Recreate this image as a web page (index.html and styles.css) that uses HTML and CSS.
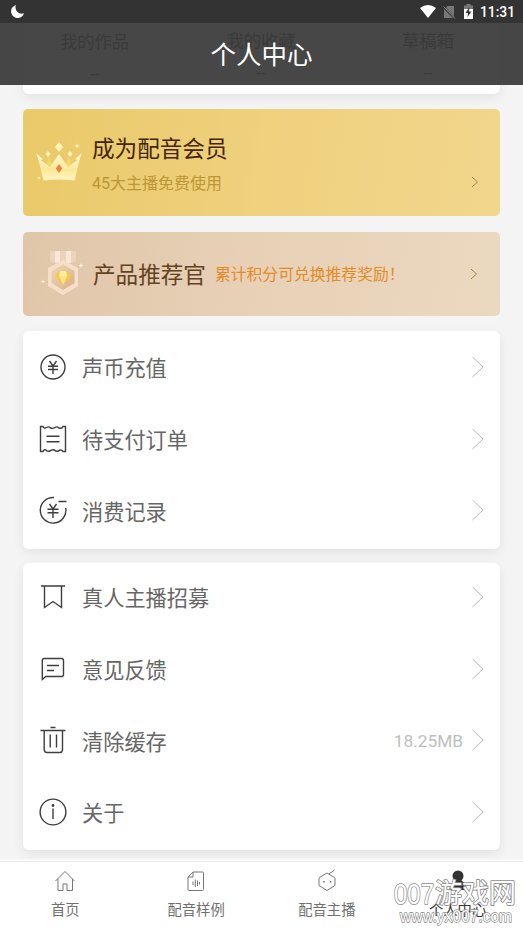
FILE: index.html
```html
<!DOCTYPE html>
<html lang="zh-CN">
<head>
<meta charset="utf-8">
<title>个人中心</title>
<link rel="stylesheet" href="styles.css">
</head>
<body>
<header class="top">
  <div class="status">
    <svg class="moon" width="15" height="15" viewBox="0 0 15 15"><path d="M6 1A6.600 6.600 0 1 0 14 9.300A6.300 6.300 0 0 1 6 1Z" fill="#fff"/></svg>
    <div class="status-right">
      <svg width="16" height="13" viewBox="0 0 16 13"><path d="M0 3Q8-3 16 3L8 13Z" fill="#fff"/></svg>
      <svg class="sim" width="13" height="14" viewBox="0 0 13 14"><path d="M4.500 1H11V11.500L3 3ZM1 4L10 13H1Z" fill="#777"/><path d="M.5 1.500L12 13.500" stroke="#888" stroke-width="1"/></svg>
      <svg class="battery" width="9" height="15" viewBox="0 0 9 15"><path d="M2.500 0H6.500V1.500H9V6H0V1.500H2.500Z" fill="#777"/><path d="M0 5H9V15H0Z" fill="#fff"/><path d="M5.500 3L1.500 9H4L3.500 13L7.500 7.500H5Z" fill="#333"/></svg>
      <span class="clock">11:31</span>
    </div>
  </div>
  <h1 class="title">个人中心</h1>
</header>

<main class="content">
  <section class="card stats">
    <div class="stat stat-works"><span>我的作品</span><span class="dash">--</span></div>
    <div class="stat stat-favorites"><span>我的收藏</span><span class="dash">--</span></div>
    <div class="stat stat-drafts"><span>草稿箱</span><span class="dash">--</span></div>
  </section>

  <section class="banner vip">
    <svg class="crown" width="48" height="42" viewBox="0 0 48 42">
      <defs><linearGradient id="cr" x2="0" y2="1"><stop offset="0" stop-color="#fff8d2"/><stop offset=".6" stop-color="#fbe998"/><stop offset="1" stop-color="#fff6c8"/></linearGradient></defs>
      <path d="M9 30L14 15L21 30ZM27 30L34 15L39 30Z" fill="#f3d966"/>
      <path d="M3 16L15 25L24 12L33 25L45 16L39.500 38.500Q24 36.500 8.500 38.500Z" fill="url(#cr)"/>
      <path d="M24 0L28 5L24 10L20 5ZM13 9L15.500 12L13 15L10.500 12ZM35 9L37.500 12L35 15L32.500 12ZM1 11L8 17L4 19ZM47 11L40 17L44 19Z" fill="#fff3bd"/>
      <path d="M24 22L27.200 26.500L24 31L20.800 26.500Z" fill="#f5803c"/>
      <path d="M42 1L42.700 3.300L45 4L42.700 4.700L42 7L41.300 4.700L39 4L41.300 3.300ZM4 34L4.500 35.500L6 36L4.500 36.500L4 38L3.500 36.500L2 36L3.500 35.500Z" fill="#fff3bd"/>
    </svg>
    <div class="vip-text">
      <div class="banner-title">成为配音会员</div>
      <div class="vip-sub">45大主播免费使用</div>
    </div>
    <svg class="small-arrow vip-arrow" width="8" height="12" viewBox="0 0 8 12"><path d="M1 1L6.500 6L1 11"/></svg>
  </section>

  <section class="banner officer">
    <svg class="medal" width="44" height="46" viewBox="0 0 44 46">
      <defs><linearGradient id="md" x2="1" y2="1"><stop offset="0" stop-color="#f0d6ba"/><stop offset="1" stop-color="#d9ae84"/></linearGradient></defs>
      <path d="M10 1H36V10Q36 13 31 12H15Q10 13 10 10Z" fill="#edd3b9"/>
      <path d="M15 1H20V13H15ZM26 1H31V13H26Z" fill="#f9e8d9"/>
      <path d="M23 10L38 18V36L23 45L8 36V18Z" fill="#f6dfc8"/>
      <path d="M23 14.500L34.500 21V33L23 40L11.500 33V21Z" fill="url(#md)"/>
      <path d="M19 21H27L31 26L23 34.500L15 26Z" fill="#f9ca43"/>
      <path d="M20 21H26L27 26H19Z" fill="#fff0a0"/>
      <path d="M19 26H27L23 34.500Z" fill="#fde488"/>
      <path d="M41 13L41.700 14.800L43.500 15.500L41.700 16.200L41 18L40.300 16.200L38.500 15.500L40.300 14.800ZM3 29L3.600 30.900L5.500 31.500L3.600 32.100L3 34L2.400 32.100L.5 31.500L2.400 30.900Z" fill="#fff1df"/>
    </svg>
    <div class="banner-title officer-title">产品推荐官</div>
    <div class="officer-sub">累计积分可兑换推荐奖励！</div>
    <svg class="small-arrow officer-arrow" width="8" height="12" viewBox="0 0 8 12"><path d="M1 1L6.500 6L1 11"/></svg>
  </section>

  <section class="card menu wallet">
    <div class="row">
      <svg class="icon" viewBox="0 0 30 30"><circle cx="15" cy="15" r="12"/><path d="M11.500 9L15 14L18.500 9M10 14.200H20M10 17.500H20M15 14V22"/></svg>
      <span class="label">声币充值</span><svg class="arrow" viewBox="0 0 14 22"><path d="M1.500 1L12 11L1.500 21"/></svg>
    </div>
    <div class="row">
      <svg class="icon" viewBox="0 0 30 30"><path d="M2.500 2.500H5Q6 5 8.500 3.500Q11 2 12.500 4Q15 5 17 3.500Q19 2 21 4Q24 5 25 2.500H27.500V27.500H25Q23 25 20.500 27Q18 28 16.500 26Q14 25 12 27Q9 28 8 26Q6 25 5 27.500H2.500Z"/><path d="M8.500 12.300H21.500M8.500 17.700H21.500"/></svg>
      <span class="label">待支付订单</span><svg class="arrow" viewBox="0 0 14 22"><path d="M1.500 1L12 11L1.500 21"/></svg>
    </div>
    <div class="row">
      <svg class="icon" viewBox="0 0 30 30"><path d="M16 2.500A12.800 12.800 0 1 0 27.700 13M20.500 6.500H28.500M11.500 9L15 14L18.500 9M9.500 14.200H20.500M9.500 17.700H20.500M15 14V23"/></svg>
      <span class="label">消费记录</span><svg class="arrow" viewBox="0 0 14 22"><path d="M1.500 1L12 11L1.500 21"/></svg>
    </div>
  </section>

  <section class="card menu support">
    <div class="row">
      <svg class="icon" viewBox="0 0 30 30"><path d="M3 4H27M6.500 4V25.500L15 19.500L23.500 25.500V4"/></svg>
      <span class="label">真人主播招募</span><svg class="arrow" viewBox="0 0 14 22"><path d="M1.500 1L12 11L1.500 21"/></svg>
    </div>
    <div class="row">
      <svg class="icon" viewBox="0 0 30 30"><path d="M4.300 25.500V6.500Q4.300 4.500 6.300 4.500H23.500Q25.500 4.500 25.500 6.500V20.500Q25.500 22.500 23.500 22.500H7.800ZM9 11.500H21M9 16.500H16"/></svg>
      <span class="label">意见反馈</span><svg class="arrow" viewBox="0 0 14 22"><path d="M1.500 1L12 11L1.500 21"/></svg>
    </div>
    <div class="row">
      <svg class="icon" viewBox="0 0 30 30"><path d="M12.500 2.500H17.500M2.500 5.500H27.500M6.200 5.500V24.500Q6.200 27.500 9 27.500H22Q24.500 27.500 24.500 24.500V5.500M12.200 9.500V22.500M18.500 9.500V22.500"/></svg>
      <span class="label">清除缓存</span><span class="size">18.25MB</span><svg class="arrow" viewBox="0 0 14 22"><path d="M1.500 1L12 11L1.500 21"/></svg>
    </div>
    <div class="row">
      <svg class="icon" viewBox="0 0 30 30"><circle cx="15" cy="15" r="12.900"/><path d="M15 11.500V22"/><circle cx="15" cy="8.500" r=".7"/></svg>
      <span class="label">关于</span><svg class="arrow" viewBox="0 0 14 22"><path d="M1.500 1L12 11L1.500 21"/></svg>
    </div>
  </section>
</main>

<nav class="tabs">
  <div class="tab">
    <svg class="tab-icon" viewBox="0 0 24 24"><path d="M2.500 12L12 2.500L21.500 12M5 10V21.500H10V15H14V21.500H19.500V10"/></svg>
    <span>首页</span>
  </div>
  <div class="tab">
    <svg class="tab-icon" viewBox="0 0 24 24"><path d="M9 3H18.500Q19.500 3 19.500 4V20.500Q19.500 21.500 18.500 21.500H5Q4 21.500 4 20.500V8ZM9 3V8H4M9 12.500V16M11.300 10.500V18M13.500 11.500V17M15.500 13V15.500"/></svg>
    <span>配音样例</span>
  </div>
  <div class="tab">
    <svg class="tab-icon" viewBox="0 0 24 24"><path d="M12 4L19.500 8.500Q20 9 20 10V16.500L12 21.500L4 16.500V10Q4 9 4.500 8.500ZM14 5Q15 3.500 17 3L19.500 1"/><path d="M9 12V13.500M15.500 12V13.500" stroke-width="1.700"/></svg>
    <span>配音主播</span>
  </div>
  <div class="tab tab-active">
    <svg class="tab-icon" viewBox="0 0 24 24"><circle cx="12" cy="7" r="5.500"/><path d="M9 11H15Q21 15 20.500 21H3.500Q4 14 9 11Z"/></svg>
    <span>个人中心</span>
  </div>
</nav>

<div class="watermark">
  <svg width="126" height="54" viewBox="0 0 126 54">
    <text class="mark-name" x="0" y="28" textLength="40" lengthAdjust="spacingAndGlyphs">007</text>
    <text class="mark-name mark-cn" x="41" y="27" textLength="81" lengthAdjust="spacingAndGlyphs">游戏网</text>
    <text class="mark-url" x="6" y="46" textLength="112" lengthAdjust="spacingAndGlyphs">www.yx007.com</text>
  </svg>
</div>
</body>
</html>
```

FILE: styles.css
```css
* { box-sizing: border-box; }

body {
  margin: 0;
  width: 523px;
  height: 931px;
  display: flex;
  flex-direction: column;
  position: relative;
  overflow: hidden;
  background: #f4f4f4;
  color: #666;
  font-family: Roboto, "Noto Sans CJK SC", sans-serif;
}

svg { display: block; flex: none; }

.top {
  position: absolute;
  inset: 0 0 auto 0;
  height: 85px;
  z-index: 2;
  display: flex;
  flex-direction: column;
  background: rgba(51, 51, 51, .9);
}
.status {
  height: 23px;
  padding: 0 8px 0 10px;
  display: flex;
  justify-content: space-between;
  align-items: center;
  background: #333;
}
.status-right { display: flex; align-items: center; }
.sim { margin-left: 7px; }
.battery { margin-left: 8px; }
.clock {
  margin-left: 7px;
  padding-top: 1px;
  color: #fff;
  font-size: 13.800px;
  font-weight: 500;
  line-height: 20px;
}
.title {
  margin: 0;
  padding-top: 2px;
  color: #fff;
  font-size: 25.500px;
  font-weight: 400;
  line-height: 60px;
  text-align: center;
}

.content {
  flex: 1;
  min-height: 0;
  padding: 0 23px;
  display: flex;
  flex-direction: column;
}
.card {
  width: 477px;
  flex: none;
  border-radius: 6px;
  background: #fff;
  box-shadow: 0 4px 12px rgba(0, 0, 0, .07);
}
.stats {
  height: 94px;
  padding-top: 26px;
  display: grid;
  grid-template-columns: 143px 1fr 155px;
}
.stat {
  height: 48px;
  display: flex;
  flex-direction: column;
  align-items: center;
  color: #777;
  font-size: 17.300px;
  line-height: 28px;
}
.stat-works { padding-top: 2px; }
.stat-favorites { padding: 1px 0 0 11px; }
.stat-drafts { border-left: 1px solid #eee; padding: 1px 0 0 10px; }
.dash { margin-top: 4px; }

.banner {
  width: 477px;
  flex: none;
  display: flex;
  border-radius: 5px;
}
.vip {
  height: 107px;
  margin-top: 15px;
  padding-left: 12px;
  background: linear-gradient(100deg, #e9c968, #efd17e 50%, #f2d68c);
}
.crown { margin-top: 33px; }
.vip-text { flex: 1; padding: 24px 0 0 9px; }
.banner-title {
  color: #452508;
  font-size: 22.600px;
  line-height: 34px;
}
.vip-sub {
  margin-top: 5px;
  color: #bc9637;
  font-size: 16px;
  line-height: 24px;
}
.small-arrow { fill: none; stroke: #a98547; stroke-width: 1; }
.vip-arrow { margin: 67px 21px 0 0; }
.officer {
  height: 84px;
  margin-top: 16px;
  padding-left: 17px;
  align-items: center;
  background: linear-gradient(100deg, #e0c6a9, #e7d0b6 45%, #ebd9bf);
}
.medal { margin-top: -3px; }
.officer-title { margin-left: 9px; padding-top: 3px; color: #63431e; }
.officer-sub {
  margin-left: 9px;
  padding-top: 1px;
  flex: 1;
  color: #e48b25;
  font-size: 15.800px;
  line-height: 24px;
  white-space: nowrap;
}
.officer-arrow { margin: -1px 22px 0 0; }

.menu { display: flex; flex-direction: column; }
.wallet { height: 218px; margin-top: 15px; }
.support { height: 287px; margin-top: 14px; }
.support .row:first-child { margin-top: -2px; }
.row {
  height: 71.700px;
  padding: 0 15px;
  display: flex;
  flex: none;
  align-items: center;
}
.icon {
  width: 30px;
  height: 30px;
  fill: none;
  stroke: #3e3e3e;
  stroke-width: 1.400;
}
.label {
  flex: 1;
  margin-left: 14px;
  padding-top: 5px;
  font-size: 21.200px;
  line-height: 32px;
}
.arrow {
  width: 14px;
  height: 22px;
  fill: none;
  stroke: #bcbcbc;
  stroke-width: 1;
}
.size { margin-right: 8px; padding-top: 1px; color: #bebebe; font-size: 17.300px; }

.tabs {
  height: 70px;
  flex: none;
  border-top: 1px solid #ececec;
  background: #fff;
  display: grid;
  grid-template-columns: repeat(4, 1fr);
  box-shadow: 0 -2px 0 #fafafa;
  position: relative;
}
.tab {
  padding-top: 7px;
  display: flex;
  flex-direction: column;
  align-items: center;
  color: #707070;
  font-size: 14.300px;
  line-height: 22px;
}
.tab-icon {
  width: 24px;
  height: 24px;
  margin-bottom: 6px;
  fill: none;
  stroke: #777;
  stroke-width: 1;
}
.tab-active { color: #333; }
.tab-active .tab-icon { fill: #333; stroke: none; }

.watermark { position: absolute; left: 394px; top: 876px; z-index: 3; }
.watermark text {
  fill: #fff;
  stroke: #8c8c8c;
  stroke-width: 1.700;
  stroke-linejoin: round;
  paint-order: stroke;
  font-family: "Liberation Sans", "Noto Sans CJK SC", sans-serif;
}
.watermark .mark-name { font-size: 30px; }
.watermark .mark-cn { font-size: 27px; }
.watermark .mark-url { font-size: 16px; stroke-width: 1.400; }
```
